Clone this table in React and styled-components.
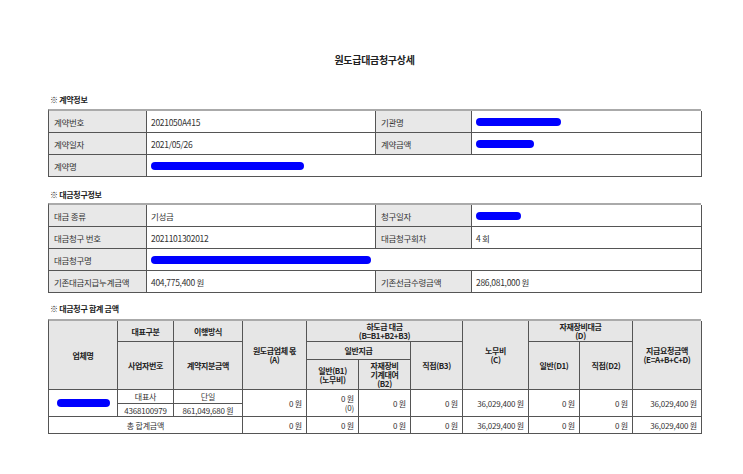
import React from 'react';
import styled, { createGlobalStyle } from 'styled-components';

const GlobalStyle = createGlobalStyle`
  *, *::before, *::after { box-sizing: border-box; }
  html, body { margin: 0; padding: 0; background: #fff; }
  body {
    font-family: "Noto Sans CJK KR", "Noto Sans", sans-serif;
    color: #333;
  }
`;

const Page = styled.div`
  width: 743px;
  padding: 52px 42px 0 48px;
`;

const Title = styled.h1`
  margin: 0;
  text-align: center;
  font-size: 10px;
  line-height: 16px;
  font-weight: 700;
  color: #222;
  letter-spacing: -0.3px;
`;

const SectionTitle = styled.h2`
  margin: ${p => p.$top}px 0 ${p => p.$bottom}px 2px;
  font-size: 8px;
  line-height: 12px;
  font-weight: 700;
  color: #222;
  letter-spacing: -0.3px;
`;

const InfoGrid = styled.div`
  display: grid;
  grid-template-columns: 98px 229px 96px 230px;
  grid-auto-rows: 22px;
  border-top: 2px solid #aaa;
  border-left: 1px solid #555;
`;

const Label = styled.div`
  display: flex;
  align-items: center;
  padding: 0 5px;
  background: #e8e8e8;
  border-right: 1px solid #555;
  border-bottom: 1px solid #555;
  font-size: 8.5px;
  color: #333;
  letter-spacing: -0.3px;
  white-space: nowrap;
`;

const Value = styled(Label)`
  background: #fff;
  padding: 0 4px;
  grid-column: span ${p => p.$span || 1};
`;

const Redacted = styled.span`
  display: inline-block;
  width: ${p => p.$w}px;
  height: 8px;
  border-radius: 4px;
  background: #0000ff;
`;

const SumGrid = styled.div`
  display: grid;
  grid-template-columns: 69px 56px 69px 64px 52px 52px 52px 66px 51px 53px 69px;
  grid-template-rows: 21px 18px 30px 14px 13px 17px;
  border-top: 2px solid #aaa;
  border-left: 1px solid #555;
`;

const Cell = styled.div`
  grid-column: ${p => p.$c};
  grid-row: ${p => p.$r};
  display: flex;
  flex-direction: column;
  justify-content: center;
  align-items: ${p => (p.$align === 'right' ? 'flex-end' : 'center')};
  padding: ${p => (p.$align === 'right' ? '0 4px 0 2px' : '0 2px')};
  border-right: 1px solid #555;
  border-bottom: 1px solid #555;
  background: #fff;
  font-size: 8px;
  line-height: 9px;
  color: #333;
  white-space: nowrap;
  letter-spacing: -0.2px;
`;

const HeadCell = styled(Cell)`
  background: #e6e6e6;
  font-size: 8px;
  line-height: 9px;
  font-weight: 700;
  color: #222;
  text-align: center;
  letter-spacing: -0.4px;
`;

const Stack = styled.span`
  display: block;
  text-align: ${p => p.$align || 'center'};
  line-height: ${p => p.$lh || 9}px;
`;

const contractRows = [
  ['계약번호', '2021050A415', '기관명', <Redacted $w={85} />],
  ['계약일자', '2021/05/26', '계약금액', <Redacted $w={58} />],
];

const claimRows = [
  ['대금 종류', '기성금', '청구일자', <Redacted $w={45} />],
  ['대금청구 번호', '2021101302012', '대금청구회차', '4 회'],
];

const totals = ['0 원', '0 원', '0 원', '0 원', '36,029,400 원', '0 원', '0 원', '36,029,400 원'];

const App = () => {
  return (
    <Page>
      <GlobalStyle />
      <Title>원도급대금청구상세</Title>

      <SectionTitle $top={26} $bottom={3}>※ 계약정보</SectionTitle>
      <InfoGrid>
        {contractRows.map(r => (
          <React.Fragment key={r[0]}>
            <Label>{r[0]}</Label>
            <Value>{r[1]}</Value>
            <Label>{r[2]}</Label>
            <Value>{r[3]}</Value>
          </React.Fragment>
        ))}
        <Label>계약명</Label>
        <Value $span={3}><Redacted $w={153} /></Value>
      </InfoGrid>

      <SectionTitle $top={12} $bottom={2}>※ 대금청구정보</SectionTitle>
      <InfoGrid>
        {claimRows.map(r => (
          <React.Fragment key={r[0]}>
            <Label>{r[0]}</Label>
            <Value>{r[1]}</Value>
            <Label>{r[2]}</Label>
            <Value>{r[3]}</Value>
          </React.Fragment>
        ))}
        <Label>대금청구명</Label>
        <Value $span={3}><Redacted $w={220} /></Value>
        <Label>기존대금지급누계금액</Label>
        <Value>404,775,400 원</Value>
        <Label>기존선금수령금액</Label>
        <Value>286,081,000 원</Value>
      </InfoGrid>

      <SectionTitle $top={10} $bottom={4}>※ 대금청구 합계 금액</SectionTitle>
      <SumGrid>
        <HeadCell $c="1" $r="1 / 4">업체명</HeadCell>
        <HeadCell $c="2" $r="1">대표구분</HeadCell>
        <HeadCell $c="3" $r="1">이행방식</HeadCell>
        <HeadCell $c="2" $r="2 / 4">사업자번호</HeadCell>
        <HeadCell $c="3" $r="2 / 4">계약지분금액</HeadCell>
        <HeadCell $c="4" $r="1 / 4">
          <Stack>원도급업체 몫</Stack>
          <Stack>(A)</Stack>
        </HeadCell>
        <HeadCell $c="5 / 8" $r="1">
          <Stack>하도급 대금</Stack>
          <Stack>(B=B1+B2+B3)</Stack>
        </HeadCell>
        <HeadCell $c="5 / 7" $r="2">일반지급</HeadCell>
        <HeadCell $c="7" $r="2 / 4">직접(B3)</HeadCell>
        <HeadCell $c="5" $r="3">
          <Stack>일반(B1)</Stack>
          <Stack>(노무비)</Stack>
        </HeadCell>
        <HeadCell $c="6" $r="3">
          <Stack>자재장비</Stack>
          <Stack>기계대여</Stack>
          <Stack>(B2)</Stack>
        </HeadCell>
        <HeadCell $c="8" $r="1 / 4">
          <Stack>노무비</Stack>
          <Stack>(C)</Stack>
        </HeadCell>
        <HeadCell $c="9 / 11" $r="1">
          <Stack>자재장비대금</Stack>
          <Stack>(D)</Stack>
        </HeadCell>
        <HeadCell $c="9" $r="2 / 4">일반(D1)</HeadCell>
        <HeadCell $c="10" $r="2 / 4">직접(D2)</HeadCell>
        <HeadCell $c="11" $r="1 / 4">
          <Stack>지급요청금액</Stack>
          <Stack>(E=A+B+C+D)</Stack>
        </HeadCell>

        <Cell $c="1" $r="4 / 6"><Redacted $w={53} /></Cell>
        <Cell $c="2" $r="4">대표사</Cell>
        <Cell $c="3" $r="4">단일</Cell>
        <Cell $c="2" $r="5">4368100979</Cell>
        <Cell $c="3" $r="5">861,049,680 원</Cell>
        <Cell $c="4" $r="4 / 6" $align="right">0 원</Cell>
        <Cell $c="5" $r="4 / 6" $align="right">
          <Stack $align="right" $lh={9}>0 원</Stack>
          <Stack $align="right" $lh={9}>(0)</Stack>
        </Cell>
        <Cell $c="6" $r="4 / 6" $align="right">0 원</Cell>
        <Cell $c="7" $r="4 / 6" $align="right">0 원</Cell>
        <Cell $c="8" $r="4 / 6" $align="right">36,029,400 원</Cell>
        <Cell $c="9" $r="4 / 6" $align="right">0 원</Cell>
        <Cell $c="10" $r="4 / 6" $align="right">0 원</Cell>
        <Cell $c="11" $r="4 / 6" $align="right">36,029,400 원</Cell>

        <Cell $c="1 / 4" $r="6">총 합계금액</Cell>
        {totals.map((t, i) => (
          <Cell key={i} $c={`${i + 4}`} $r="6" $align="right">{t}</Cell>
        ))}
      </SumGrid>
    </Page>
  );
};

export default App;
